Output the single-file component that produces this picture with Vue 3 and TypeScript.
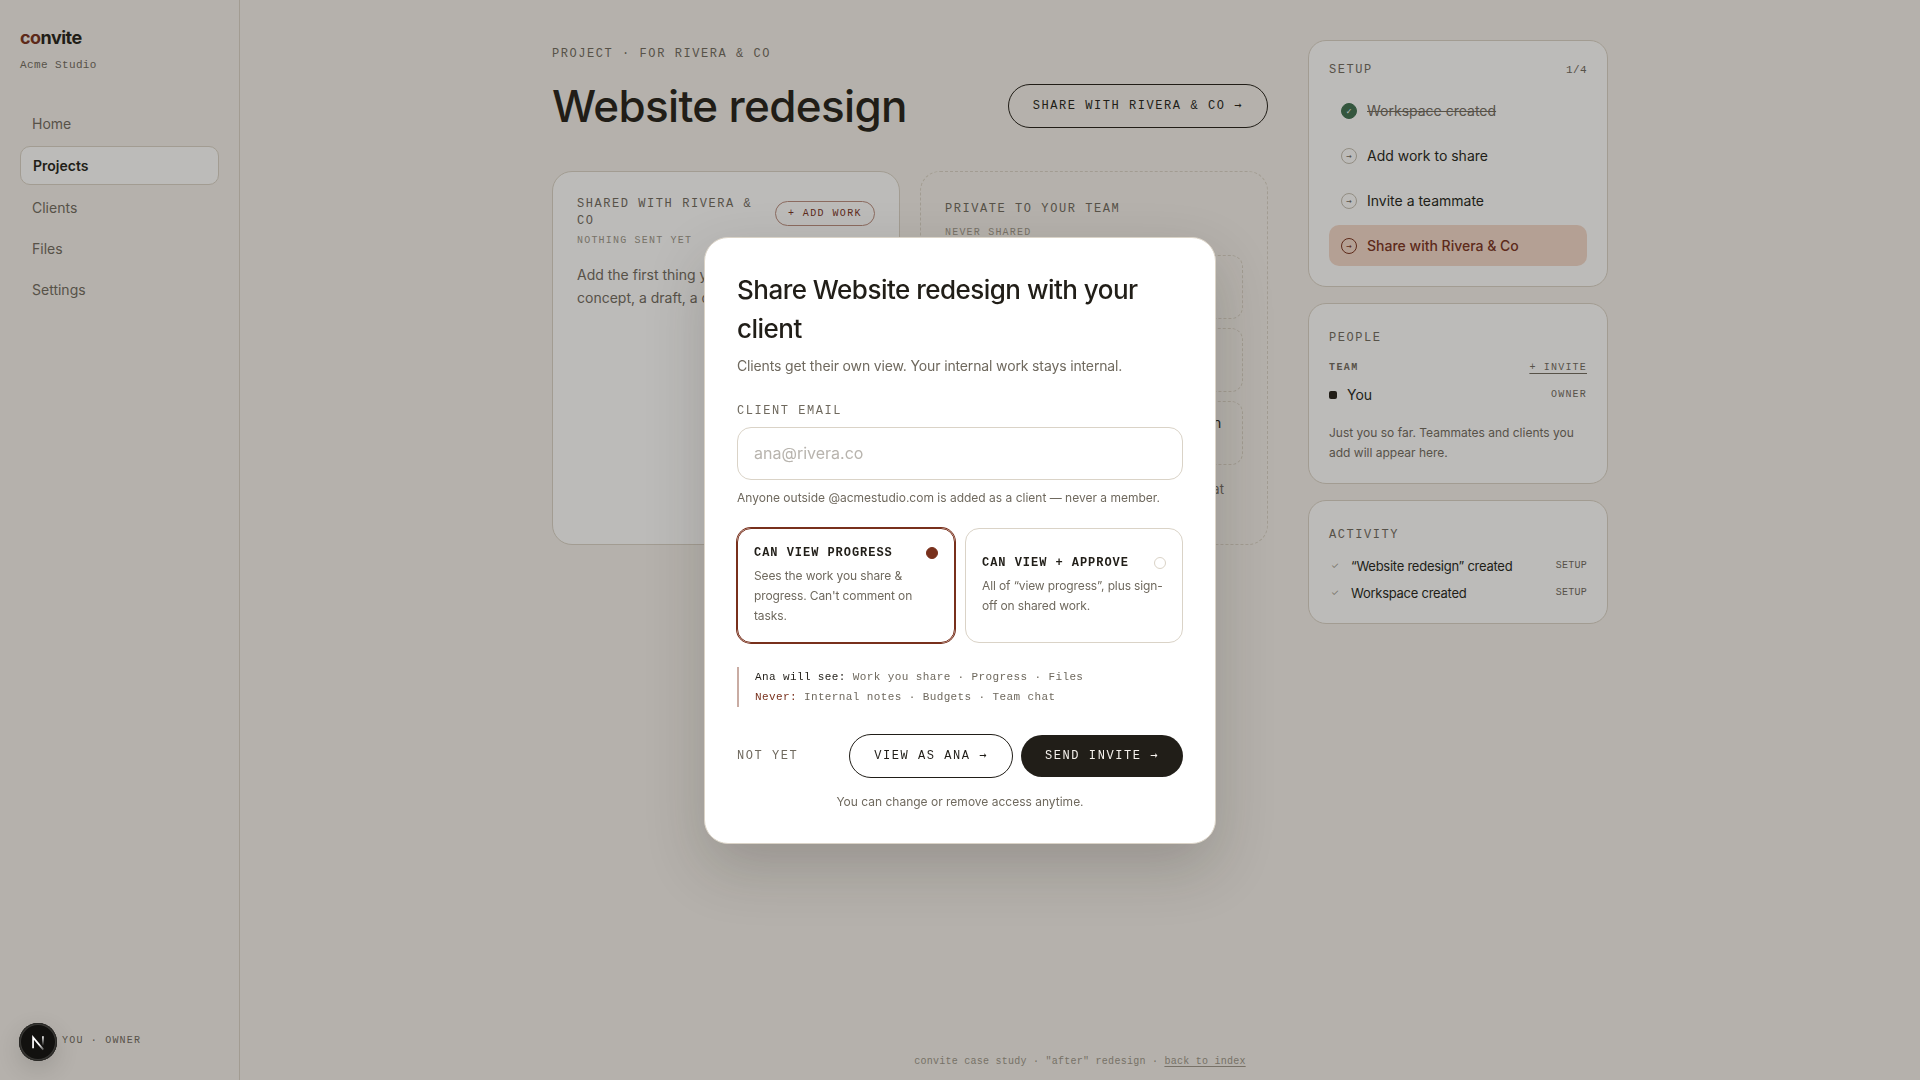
<script setup lang="ts">
import { ref } from 'vue'

interface Step { label: string; state: 'done' | 'todo' | 'active' }
interface Access { id: string; title: string; text: string }

const navItems: string[] = ['Home', 'Projects', 'Clients', 'Files', 'Settings']
const current = ref('Projects')

const steps: Step[] = [
  { label: 'Workspace created', state: 'done' },
  { label: 'Add work to share', state: 'todo' },
  { label: 'Invite a teammate', state: 'todo' },
  { label: 'Share with Rivera & Co', state: 'active' },
]

const privateItems: string[] = ['Internal notes', 'Budget', 'Rough drafts and early team discussion']

const activity: string[] = ['“Website redesign” created', 'Workspace created']

const accessLevels: Access[] = [
  { id: 'view', title: 'Can view progress', text: "Sees the work you share & progress. Can't comment on tasks." },
  { id: 'approve', title: 'Can view + approve', text: 'All of “view progress”, plus sign-off on shared work.' },
]
const access = ref('view')
const email = ref('')
</script>

<template>
  <div class="app">
    <aside class="sidebar">
      <div class="brand"><span>co</span>nvite</div>
      <div class="studio">Acme Studio</div>
      <nav class="nav" aria-label="Main">
        <a v-for="item in navItems" :key="item" href="#" :class="{ on: item === current }" @click.prevent="current = item">{{ item }}</a>
      </nav>
      <div class="tiny whoami">You · Owner</div>
    </aside>

    <main class="main">
      <div class="content">
        <section class="project">
          <div class="label eyebrow">Project · for Rivera &amp; Co</div>
          <header class="project-head">
            <h1>Website redesign</h1>
            <button type="button" class="btn outline">Share with Rivera &amp; Co <span class="arrow">→</span></button>
          </header>

          <div class="boards">
            <section class="board shared">
              <div class="board-head">
                <h2 class="label">Shared with Rivera &amp; Co</h2>
                <button type="button" class="btn-small">+ Add work</button>
              </div>
              <div class="tiny faint board-note">Nothing sent yet</div>
              <p>Add the first thing you want to share: a concept, a draft, a direction.</p>
            </section>

            <section class="board private">
              <h2 class="label">Private to your team</h2>
              <div class="tiny faint board-note">Never shared</div>
              <ul>
                <li v-for="item in privateItems" :key="item">{{ item }}</li>
              </ul>
              <div class="board-foot">Clients never see your notes, budgets or chat</div>
            </section>
          </div>
        </section>

        <div class="rail">
          <section class="card setup">
            <div class="row">
              <h2 class="label">Setup</h2>
              <span class="count">1/4</span>
            </div>
            <ul class="steps">
              <li v-for="step in steps" :key="step.label" :class="step.state">
                <span class="dot">{{ step.state === 'done' ? '✓' : '→' }}</span>
                <span class="step-label">{{ step.label }}</span>
              </li>
            </ul>
          </section>

          <section class="card">
            <h2 class="label">People</h2>
            <div class="row team">
              <span class="tiny team-name">Team</span>
              <a href="#" class="tiny invite">+ Invite</a>
            </div>
            <div class="row person">
              <span class="name"><i></i>You</span>
              <span class="tiny">Owner</span>
            </div>
            <p class="people-note">Just you so far. Teammates and clients you add will appear here.</p>
          </section>

          <section class="card">
            <h2 class="label">Activity</h2>
            <ul class="activity">
              <li v-for="entry in activity" :key="entry">
                <span class="tick">✓</span>
                <span class="entry">{{ entry }}</span>
                <span class="tag">Setup</span>
              </li>
            </ul>
          </section>
        </div>
      </div>

      <footer class="page-foot">convite case study · "after" redesign · <a href="#">back to index</a></footer>
    </main>

    <div class="backdrop">
      <form class="modal" role="dialog" aria-modal="true" aria-labelledby="share-title" @submit.prevent>
        <h2 id="share-title">Share Website redesign with your client</h2>
        <p class="lead">Clients get their own view. Your internal work stays internal.</p>

        <label class="label" for="client-email">Client email</label>
        <input id="client-email" v-model="email" type="email" class="email" placeholder="ana@rivera.co" />
        <p class="hint">Anyone outside @acmestudio.com is added as a client — never a member.</p>

        <div class="levels" role="radiogroup" aria-label="Access level">
          <label v-for="level in accessLevels" :key="level.id" class="level" :class="{ picked: access === level.id }">
            <span class="level-head">
              <span>{{ level.title }}</span>
              <input v-model="access" type="radio" name="access" :value="level.id" />
            </span>
            <span class="level-text">{{ level.text }}</span>
          </label>
        </div>

        <div class="scope">
          <div><b>Ana will see:</b> Work you share · Progress · Files</div>
          <div><b class="never">Never:</b> Internal notes · Budgets · Team chat</div>
        </div>

        <div class="actions">
          <button type="button" class="btn plain">Not yet</button>
          <button type="button" class="btn outline">View as Ana <span class="arrow">→</span></button>
          <button type="submit" class="btn solid">Send invite <span class="arrow">→</span></button>
        </div>
        <p class="after">You can change or remove access anytime.</p>
      </form>
    </div>

    <button type="button" class="dev-badge" aria-label="Open developer tools">
      <svg viewBox="0 0 40 40" width="38" height="38" fill="none" aria-hidden="true">
        <defs>
          <linearGradient id="diag" x1="22" y1="22" x2="27" y2="28" gradientUnits="userSpaceOnUse">
            <stop stop-color="#fff" /><stop offset="1" stop-color="#fff" stop-opacity="0.2" />
          </linearGradient>
          <linearGradient id="stem" x1="25" y1="14" x2="25" y2="24" gradientUnits="userSpaceOnUse">
            <stop stop-color="#fff" /><stop offset="1" stop-color="#fff" stop-opacity="0" />
          </linearGradient>
        </defs>
        <path d="M14.8 26.5V15.2L25.6 28" stroke="url(#diag)" stroke-width="1.8" />
        <path d="M25.2 14v10" stroke="url(#stem)" stroke-width="1.8" />
      </svg>
    </button>
  </div>
</template>

<style>
body {
  background: #f5f1ec;
}
</style>

<style scoped>
.app {
  --ink: #211e18;
  --muted: #6f695e;
  --faint: #9c968a;
  --line: #dad3c7;
  --accent: #78301c;
  --mono: "Liberation Mono", "Courier New", monospace;
  --sans: Inter, "Liberation Sans", sans-serif;
  position: relative;
  display: flex;
  min-height: 100vh;
  color: var(--ink);
  background: #f5f1ec;
  font-family: var(--sans);
  font-size: 14px;
  line-height: 21px;
}
.app *,
.app *::before {
  box-sizing: border-box;
}
h1, h2, p, ul {
  margin: 0;
  padding: 0;
  font-weight: 400;
}
ul {
  list-style: none;
}
button, input {
  font-family: inherit;
}
.label {
  display: block;
  font-family: var(--mono);
  font-size: 12px;
  line-height: 17px;
  letter-spacing: 0.13em;
  text-transform: uppercase;
  color: var(--muted);
}
.tiny {
  font-family: var(--mono);
  font-size: 10px;
  line-height: 16px;
  letter-spacing: 0.12em;
  text-transform: uppercase;
  color: var(--muted);
}
.faint {
  color: var(--faint);
}
.arrow {
  font-family: "DejaVu Sans Mono", monospace;
  line-height: 1;
}
.row {
  display: flex;
  align-items: center;
  justify-content: space-between;
}

/* sidebar */
.sidebar {
  display: flex;
  flex: 0 0 240px;
  flex-direction: column;
  padding: 24px 20px 31px;
  border-right: 1px solid var(--line);
}
.brand {
  font-size: 18px;
  line-height: 27px;
  font-weight: 700;
  letter-spacing: -0.03em;
}
.brand span {
  color: var(--accent);
}
.studio {
  margin-top: 5px;
  font-family: var(--mono);
  font-size: 11px;
  line-height: 18px;
  letter-spacing: 0.035em;
  color: var(--muted);
}
.nav {
  display: flex;
  flex-direction: column;
  gap: 4px;
  margin-top: 31px;
}
.nav a {
  padding: 8px 12px;
  border-radius: 10px;
  color: var(--muted);
  text-decoration: none;
}
.nav a.on {
  border: 1px solid var(--line);
  background: #fff;
  color: var(--ink);
  font-weight: 600;
}
.whoami {
  margin-top: auto;
  padding-left: 42px;
}

/* main */
.main {
  display: flex;
  flex: 1;
  min-width: 0;
  flex-direction: column;
}
.content {
  display: grid;
  grid-template-columns: minmax(0, 1fr) 300px;
  gap: 40px;
  align-items: start;
  width: 100%;
  max-width: 1120px;
  margin: 0 auto;
  padding: 40px 32px;
  box-sizing: border-box;
}
.eyebrow {
  line-height: 28px;
}
.project-head {
  display: flex;
  align-items: center;
  justify-content: space-between;
  gap: 24px;
  margin: 16px 0 43px;
}
h1 {
  font-size: 44px;
  line-height: 42px;
  font-weight: 500;
  letter-spacing: -0.015em;
}
.btn {
  padding: 12px 24px;
  border: 0;
  border-radius: 999px;
  background: none;
  color: var(--ink);
  font-family: var(--mono);
  font-size: 12px;
  line-height: 18px;
  letter-spacing: 0.13em;
  text-transform: uppercase;
  white-space: nowrap;
  cursor: pointer;
}
.btn.outline {
  border: 1px solid var(--ink);
}
.btn.solid {
  background: var(--ink);
  color: #f5f1ec;
}
.btn.plain {
  margin-right: auto;
  padding: 12px 0;
  color: var(--muted);
}
.boards {
  display: grid;
  grid-template-columns: 1fr 1fr;
  gap: 20px;
}
.board {
  padding: 24px;
  border: 1px solid var(--line);
  border-radius: 20px;
}
.shared {
  background: #fff;
}
.board-head {
  display: flex;
  align-items: center;
  justify-content: space-between;
  gap: 16px;
}
.btn-small {
  padding: 4px 12px;
  border: 1px solid #b98c7e;
  border-radius: 999px;
  background: none;
  color: var(--accent);
  font-family: var(--mono);
  font-size: 10px;
  line-height: 15px;
  letter-spacing: 0.14em;
  text-transform: uppercase;
  white-space: nowrap;
}
.shared .board-note {
  margin: 3px 0 14px;
}
.shared p {
  line-height: 23px;
  color: var(--muted);
}
.private {
  padding-top: 29px;
  border-style: dashed;
}
.private .board-note {
  margin: 7px 0 14px;
}
.private ul {
  display: flex;
  flex-direction: column;
  gap: 9px;
}
.private li {
  height: 64px;
  padding: 10px 14px;
  border: 1px dashed var(--line);
  border-radius: 12px;
  white-space: nowrap;
}
.board-foot {
  margin: 14px 0 20px;
  font-size: 13px;
  color: var(--muted);
  white-space: nowrap;
}

/* right rail */
.rail {
  display: flex;
  flex-direction: column;
  gap: 16px;
}
.card {
  padding: 25px 20px 20px;
  border: 1px solid var(--line);
  border-radius: 18px;
  background: #fff;
}
.card .label {
  line-height: 18px;
}
.setup {
  padding-top: 20px;
}
.count {
  font-family: var(--mono);
  font-size: 11px;
  line-height: 18px;
  letter-spacing: 0.035em;
  color: var(--muted);
}
.steps {
  display: flex;
  flex-direction: column;
  gap: 4px;
  margin-top: 11px;
}
.steps li {
  display: flex;
  align-items: center;
  gap: 10px;
  padding: 10px 12px;
  border-radius: 10px;
}
.dot {
  display: flex;
  flex: 0 0 16px;
  align-items: center;
  justify-content: center;
  height: 16px;
  border: 1px solid #c4beb2;
  border-radius: 50%;
  color: var(--muted);
  font-family: "DejaVu Sans Mono", monospace;
  font-size: 9px;
  line-height: 14px;
}
.done .dot {
  border-color: #3d6f50;
  background: #3d6f50;
  color: #fff;
}
.done {
  color: var(--muted);
}
.done .step-label {
  text-decoration: line-through;
}
.active {
  background: #f4d9ca;
  color: var(--accent);
  font-weight: 500;
}
.active .dot {
  border-color: var(--accent);
  color: var(--accent);
}
.team {
  margin-top: 13px;
}
.team-name {
  font-weight: 700;
  letter-spacing: 0.14em;
}
.invite {
  text-underline-offset: 3px;
}
.person {
  margin-top: 8px;
}
.name {
  display: flex;
  align-items: center;
  gap: 10px;
}
.name i {
  width: 8px;
  height: 8px;
  border-radius: 2px;
  background: var(--ink);
}
.people-note {
  margin-top: 18px;
  font-size: 12px;
  line-height: 20px;
  color: var(--muted);
}
.activity {
  display: flex;
  flex-direction: column;
  gap: 7px;
  margin-top: 12px;
}
.activity li {
  display: flex;
  align-items: center;
  gap: 10px;
  line-height: 20px;
}
.tick {
  width: 12px;
  text-align: center;
  font-size: 9px;
  color: var(--faint);
}
.entry {
  flex: 1;
  font-size: 13px;
  letter-spacing: -0.02em;
}
.tag {
  font-family: var(--mono);
  font-size: 10px;
  letter-spacing: 0.025em;
  text-transform: uppercase;
  color: var(--muted);
}
.page-foot {
  margin-top: auto;
  padding-bottom: 11px;
  text-align: center;
  font-family: var(--mono);
  font-size: 10px;
  line-height: 15px;
  letter-spacing: 0.025em;
  color: var(--faint);
}
.page-foot a {
  color: var(--faint);
  text-underline-offset: 2px;
}

/* dialog */
.backdrop {
  position: fixed;
  inset: 0;
  display: flex;
  align-items: center;
  justify-content: center;
  background: rgba(33, 30, 24, 0.3);
}
.modal {
  width: 100%;
  max-width: 512px;
  padding: 32px;
  border: 1px solid var(--line);
  border-radius: 24px;
  background: #fff;
  box-shadow: 0 24px 60px rgba(33, 30, 24, 0.2);
}
.modal h2 {
  font-size: 26px;
  line-height: 39px;
  font-weight: 500;
  letter-spacing: -0.02em;
}
.lead {
  margin: 7px 0 27px;
  letter-spacing: -0.01em;
  color: var(--muted);
}
.email {
  display: block;
  width: 100%;
  height: 53px;
  margin: 7px 0 8px;
  padding: 0 16px;
  border: 1px solid var(--line);
  border-radius: 14px;
  outline: 0;
  background: #fff;
  color: var(--ink);
  font-size: 16px;
}
.email::placeholder {
  color: #b8b4ae;
}
.hint, .after {
  font-size: 12px;
  line-height: 19px;
  color: var(--muted);
}
.levels {
  display: grid;
  grid-template-columns: 1fr 1fr;
  gap: 10px;
  margin: 21px 0 24px;
}
.level {
  display: flex;
  flex-direction: column;
  justify-content: center;
  gap: 4px;
  padding: 16px;
  border: 1px solid var(--line);
  border-radius: 14px;
  cursor: pointer;
}
.level.picked {
  border-color: var(--accent);
  box-shadow: 0 0 0 1px var(--accent);
}
.level-head {
  display: flex;
  align-items: center;
  justify-content: space-between;
  font-family: var(--mono);
  font-size: 12px;
  line-height: 17px;
  letter-spacing: 0.08em;
  font-weight: 700;
  text-transform: uppercase;
}
.level input {
  width: 12px;
  height: 12px;
  margin: 0;
  border: 1px solid var(--line);
  border-radius: 50%;
  appearance: none;
}
.level input:checked {
  border-color: var(--accent);
  background: var(--accent);
}
.level-text {
  font-size: 12px;
  line-height: 20px;
  letter-spacing: -0.01em;
  color: var(--muted);
}
.scope {
  padding-left: 16px;
  border-left: 2px solid #c9aca3;
  font-family: var(--mono);
  font-size: 11px;
  line-height: 20px;
  letter-spacing: 0.035em;
  color: var(--muted);
}
.scope b {
  font-weight: 400;
  color: var(--ink);
}
.scope .never {
  color: var(--accent);
}
.actions {
  display: flex;
  align-items: center;
  gap: 8px;
  margin: 27px 0 14px;
}
.after {
  text-align: center;
}

/* floating developer badge */
.dev-badge {
  position: fixed;
  left: 19px;
  bottom: 19px;
  width: 38px;
  height: 38px;
  padding: 0;
  border: 0;
  border-radius: 50%;
  background: #12110f;
  box-shadow: inset 0 0 0 1px #2a2926, inset 0 0 0 2px #3a3936, 0 8px 24px rgba(0, 0, 0, 0.14);
}
.dev-badge svg {
  display: block;
}
</style>
